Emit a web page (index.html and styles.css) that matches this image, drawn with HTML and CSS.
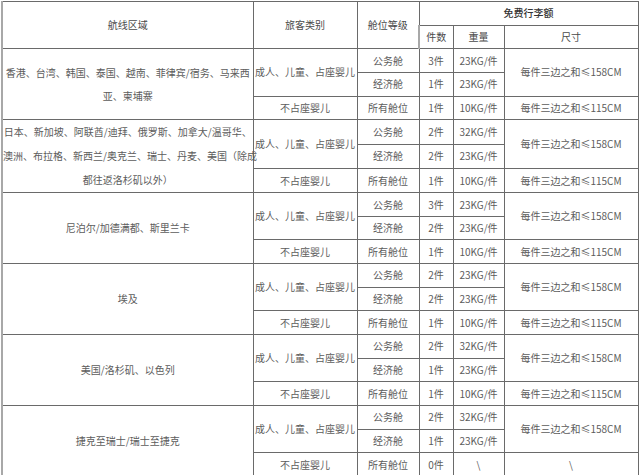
FILE: index.html
```html
<!DOCTYPE html>
<html lang="zh-CN">
<head>
<meta charset="utf-8">
<link rel="stylesheet" href="styles.css">
</head>
<body>
<div class="wrap">
<table class="baggage">
  <colgroup>
    <col class="c-region"><col class="c-pax"><col class="c-cabin"><col class="c-num"><col class="c-weight"><col class="c-size">
  </colgroup>
  <thead>
    <tr><th rowspan="2">航线区域</th><th rowspan="2">旅客类别</th><th rowspan="2">舱位等级</th><th colspan="3" class="strong">免费行李额</th></tr>
    <tr><th>件数</th><th>重量</th><th>尺寸</th></tr>
  </thead>
  <tbody>
    <tr><td rowspan="3" class="region">香港、台湾、韩国、泰国、越南、菲律宾/宿务、马来西<br>亚、柬埔寨</td><td rowspan="2">成人、儿童、占座婴儿</td><td>公务舱</td><td>3件</td><td>23KG/件</td><td rowspan="2">每件三边之和≤158CM</td></tr>
    <tr><td>经济舱</td><td>1件</td><td>23KG/件</td></tr>
    <tr><td>不占座婴儿</td><td>所有舱位</td><td>1件</td><td>10KG/件</td><td>每件三边之和≤115CM</td></tr>

    <tr><td rowspan="3" class="region tight">日本、新加坡、阿联酋/迪拜、俄罗斯、加拿大/温哥华、<br>澳洲、布拉格、新西兰/奥克兰、瑞士、丹麦、美国（除成<br>都往返洛杉矶以外）</td><td rowspan="2">成人、儿童、占座婴儿</td><td>公务舱</td><td>2件</td><td>32KG/件</td><td rowspan="2">每件三边之和≤158CM</td></tr>
    <tr><td>经济舱</td><td>2件</td><td>23KG/件</td></tr>
    <tr><td>不占座婴儿</td><td>所有舱位</td><td>1件</td><td>10KG/件</td><td>每件三边之和≤115CM</td></tr>

    <tr><td rowspan="3" class="region">尼泊尔/加德满都、斯里兰卡</td><td rowspan="2">成人、儿童、占座婴儿</td><td>公务舱</td><td>3件</td><td>23KG/件</td><td rowspan="2">每件三边之和≤158CM</td></tr>
    <tr><td>经济舱</td><td>2件</td><td>23KG/件</td></tr>
    <tr><td>不占座婴儿</td><td>所有舱位</td><td>1件</td><td>10KG/件</td><td>每件三边之和≤115CM</td></tr>

    <tr><td rowspan="3" class="region">埃及</td><td rowspan="2">成人、儿童、占座婴儿</td><td>公务舱</td><td>2件</td><td>23KG/件</td><td rowspan="2">每件三边之和≤158CM</td></tr>
    <tr><td>经济舱</td><td>2件</td><td>23KG/件</td></tr>
    <tr><td>不占座婴儿</td><td>所有舱位</td><td>1件</td><td>10KG/件</td><td>每件三边之和≤115CM</td></tr>

    <tr><td rowspan="3" class="region">美国/洛杉矶、以色列</td><td rowspan="2">成人、儿童、占座婴儿</td><td>公务舱</td><td>2件</td><td>32KG/件</td><td rowspan="2">每件三边之和≤158CM</td></tr>
    <tr><td>经济舱</td><td>1件</td><td>23KG/件</td></tr>
    <tr><td>不占座婴儿</td><td>所有舱位</td><td>1件</td><td>10KG/件</td><td>每件三边之和≤115CM</td></tr>

    <tr><td rowspan="3" class="region">捷克至瑞士/瑞士至捷克</td><td rowspan="2">成人、儿童、占座婴儿</td><td>公务舱</td><td>2件</td><td>32KG/件</td><td rowspan="2">每件三边之和≤158CM</td></tr>
    <tr><td>经济舱</td><td>1件</td><td>23KG/件</td></tr>
    <tr><td>不占座婴儿</td><td>所有舱位</td><td>0件</td><td>\</td><td>\</td></tr>
  </tbody>
</table>
</div>
</body>
</html>
```
FILE: styles.css
```css
html, body {
  margin: 0;
  padding: 0;
  background: #ffffff;
}
.wrap {
  padding: 1px 0 0 1px;
}
.baggage {
  width: 636px;
  table-layout: fixed;
  border-collapse: collapse;
  font-family: "Noto Sans CJK SC", "Noto Sans", sans-serif;
  font-size: 10px;
  color: #5c5c5c;
}
.c-region { width: 251px; }
.c-pax { width: 104px; }
.c-cabin { width: 62px; }
.c-num { width: 34px; }
.c-weight { width: 51px; }
.c-size { width: 134px; }
.baggage tr {
  height: 23.65px;
}
.baggage th,
.baggage td {
  border: 1px solid #6a6a6a;
  padding: 0;
  text-align: center;
  vertical-align: middle;
  white-space: nowrap;
  line-height: 14px;
  font-weight: normal;
  overflow: visible;
}
.baggage th {
  color: #4a4a4a;
}
.baggage th.strong {
  color: #333333;
  font-weight: 500;
}
.baggage td:first-child,
.baggage th:first-child {
  border-left: 2px solid #a8a8a8;
}
.baggage tbody tr td:not(.region) {
  border-left-width: 1px;
}
.baggage td.region {
  line-height: 23.5px;
}
.baggage td.region.tight {
  line-height: 24px;
}
```
